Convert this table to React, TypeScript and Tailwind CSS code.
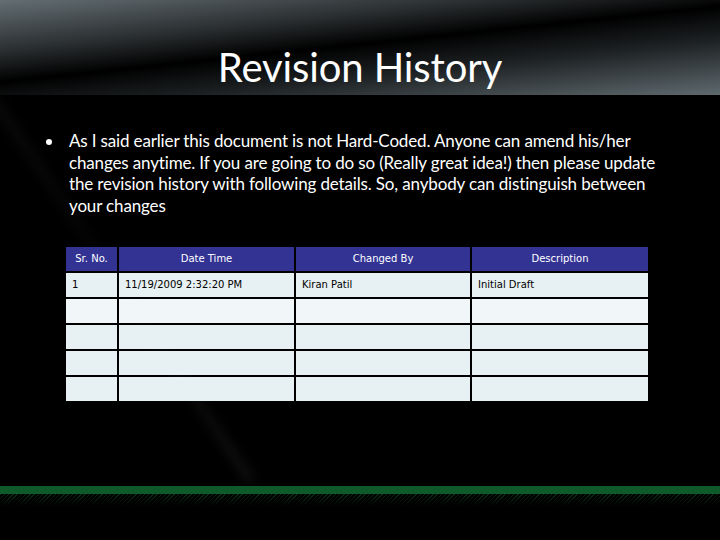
const lines = [
  'As I said earlier this document is not Hard-Coded. Anyone can amend his/her',
  'changes anytime. If you are going to do so (Really great idea!) then please update',
  'the revision history with following details. So, anybody can distinguish between',
  'your changes',
];

const headers = ['Sr. No.', 'Date Time', 'Changed By', 'Description'];

const rows = [
  ['1', '11/19/2009 2:32:20 PM', 'Kiran Patil', 'Initial Draft'],
  ['', '', '', ''],
  ['', '', '', ''],
  ['', '', '', ''],
  ['', '', '', ''],
];

export default function App() {
  return (
    <div className="relative w-[720px] h-[540px] overflow-hidden bg-black font-['Lato','Liberation_Sans',sans-serif]">
      {/* faint diagonal streak */}
      <div className="absolute left-[-8px] top-[100px] w-[4px] h-[460px] origin-top -rotate-[34deg] bg-gradient-to-b from-white/10 via-white/[0.03] to-white/15 blur-[6px]" />

      {/* title band */}
      <div className="h-[95px] flex items-end justify-center pb-[4px] bg-[linear-gradient(174deg,#646f73_0%,#2a2e30_30%,#000_48%,#1e2224_68%,#5f6a6e_100%)]">
        <h1 className="text-[40px] leading-[48px] text-white tracking-[-0.1px]">Revision History</h1>
      </div>

      {/* bullet text */}
      <div className="relative flex gap-[17px] pl-[46px] pt-[35px]">
        <div className="mt-[9px] w-[6px] h-[6px] rounded-full bg-white shrink-0" />
        <p className="text-[17px] leading-[21.7px] text-white tracking-[-0.15px]">
          {lines.map((l) => (
            <span key={l} className="block whitespace-nowrap">{l}</span>
          ))}
        </p>
      </div>

      {/* table */}
      <div className="relative ml-[66px] mt-[30px] w-[582px] grid grid-cols-[51px_175px_174px_176px] gap-[2px] font-['DejaVu_Sans','Liberation_Sans',sans-serif] text-[10px]">
        {headers.map((h) => (
          <div key={h} className="h-[24px] flex items-center justify-center bg-[#333394] text-white">
            {h}
          </div>
        ))}
        {rows.map((r, i) =>
          r.map((c, j) => (
            <div
              key={`${i}-${j}`}
              className={`h-[24px] flex items-center pl-[6px] text-black ${i === 1 ? 'bg-[#f1f7f9]' : 'bg-[#e7f0f2]'}`}
            >
              {c}
            </div>
          ))
        )}
      </div>

      {/* footer stripe */}
      <div className="absolute left-0 top-[486px] w-full">
        <div className="h-[8px] bg-[#0e5a2a]" />
        <div className="relative h-[13px] bg-[repeating-linear-gradient(135deg,#0d3f1f_0px,#0d3f1f_1px,#000_1px,#000_3px)] opacity-70">
          <div className="absolute inset-0 bg-gradient-to-b from-black/0 to-black" />
        </div>
      </div>
    </div>
  );
}
